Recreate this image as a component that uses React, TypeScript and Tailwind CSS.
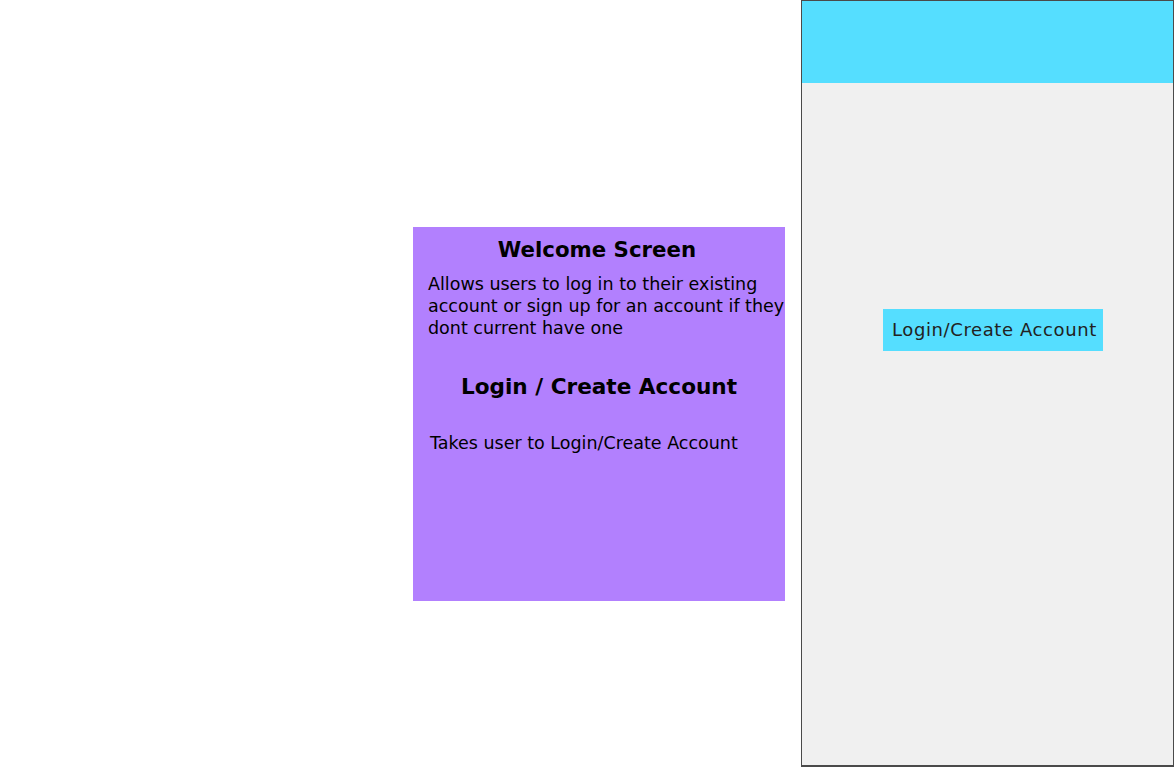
export default function App() {
  return (
    <div className="flex h-[767px] w-[1174px] bg-white" style={{ fontFamily: '"DejaVu Sans", Verdana, sans-serif' }}>
      <div className="w-[413px] shrink-0" />
      <div className="mt-[227px] flex h-[374px] w-[372px] shrink-0 flex-col bg-[#b280fe] text-black">
        <h1 className="mt-[10px] pr-[4px] text-center text-[21.3px] font-bold leading-[26px]">Welcome Screen</h1>
        <p className="mt-[10px] whitespace-nowrap pl-[15px] text-[17.5px] leading-[22px]">
          Allows users to log in to their existing
          <br />
          account or sign up for an account if they
          <br />
          dont current have one
        </p>
        <h2 className="mt-[35px] text-center text-[21.6px] font-bold leading-[26px]">Login / Create Account</h2>
        <p className="mt-[32px] pl-[17px] text-[17.5px] leading-[22px]">Takes user to Login/Create Account</p>
      </div>
      <div className="ml-[16px] flex h-[767px] w-[373px] shrink-0 flex-col border border-b-2 border-[#4a4a4a] bg-[#f0f0f0]">
        <div className="h-[82px] bg-[#55deff]" />
        <div className="mt-[226px] ml-[81px] flex h-[42px] w-[220px] items-center bg-[#55deff] pb-[2px] pl-[9px] text-[18px] tracking-[0.6px] text-[#222]">
          Login/Create Account
        </div>
      </div>
    </div>
  );
}
